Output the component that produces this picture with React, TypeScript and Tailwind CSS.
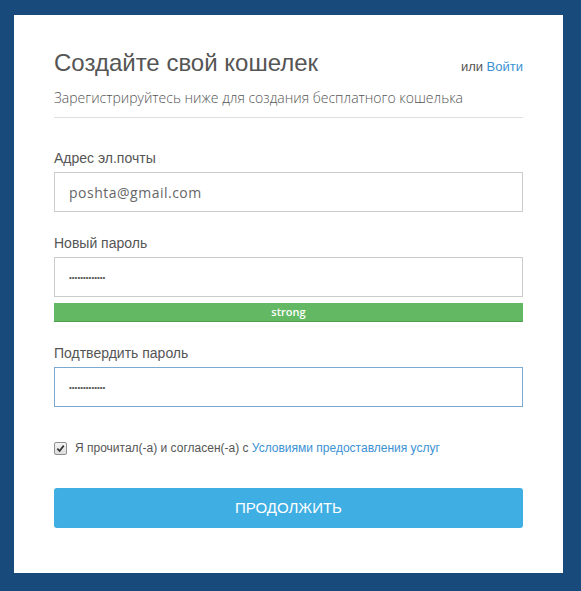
import { useState } from 'react'

export default function App() {
  const [agreed, setAgreed] = useState(true)

  const label = 'block text-[14px] leading-none text-[#555]'
  const input =
    'mt-[7px] block h-[40px] w-full border bg-white px-[14px] text-[#555] outline-none'

  return (
    <div className="h-[591px] w-[581px] bg-[#184a7c] pl-[14px] pr-[18px] pt-[15px] pb-[18px] font-['Liberation_Sans',Arial,sans-serif]">
      <div className="h-full bg-white px-[40px] pt-[33px]">
        <div className="flex items-baseline justify-between">
          <h1 className="text-[24px] leading-[30px] text-[#555]">Создайте свой кошелек</h1>
          <span className="text-[13px] text-[#555]">
            или <a className="text-[#3a91d3]">Войти</a>
          </span>
        </div>
        <p className="mt-[13px] font-['Open_Sans',sans-serif] text-[14px] font-light leading-none text-[#555]">
          Зарегистрируйтесь ниже для создания бесплатного кошелька
        </p>
        <div className="mt-[12px] h-px bg-[#dedede]" />

        <div className="mt-[33px]">
          <label className={label}>Адрес эл.почты</label>
          <input
            className={`${input} border-[#cccccc] font-['Open_Sans',sans-serif] text-[14px] tracking-[0.5px] !text-[#666]`}
            defaultValue="poshta@gmail.com"
          />
        </div>

        <div className="mt-[24px]">
          <label className={label}>Новый пароль</label>
          <input type="password" className={`${input} border-[#cccccc] text-[8px]`} defaultValue="aaaaaaaaaaaaa" />
          <div className="mt-[6px] flex h-[19px] items-center justify-center border-b border-[#4f9f4f] bg-[#63b963] font-['Open_Sans',sans-serif] text-[11px] font-semibold text-white">
            strong
          </div>
        </div>

        <div className="mt-[24px]">
          <label className={label}>Подтвердить пароль</label>
          <input type="password" className={`${input} border-[#7ba9cf] text-[8px]`} defaultValue="aaaaaaaaaaaaa" />
        </div>

        <label className="mt-[32px] flex items-center gap-[8px] text-[12px] text-[#555]">
          <span
            onClick={() => setAgreed(!agreed)}
            className="flex h-[13px] w-[13px] items-center justify-center rounded-[2px] border border-[#8f8f8f] bg-gradient-to-b from-[#f4f4f4] to-[#dcdcdc]"
          >
            {agreed && (
              <svg viewBox="0 0 10 10" className="h-[9px] w-[9px]">
                <path d="M1.5 5.2 L4 7.8 L8.6 1.8" fill="none" stroke="#333" strokeWidth="1.9" />
              </svg>
            )}
          </span>
          <span>
            Я прочитал(-а) и согласен(-а) с{' '}
            <a className="text-[#3a91d3]">Условиями предоставления услуг</a>
          </span>
        </label>

        <button className="mt-[31px] flex h-[40px] w-full items-center justify-center rounded-[3px] bg-[#3eaee3] text-[15px] text-white">
          ПРОДОЛЖИТЬ
        </button>
      </div>
    </div>
  )
}
